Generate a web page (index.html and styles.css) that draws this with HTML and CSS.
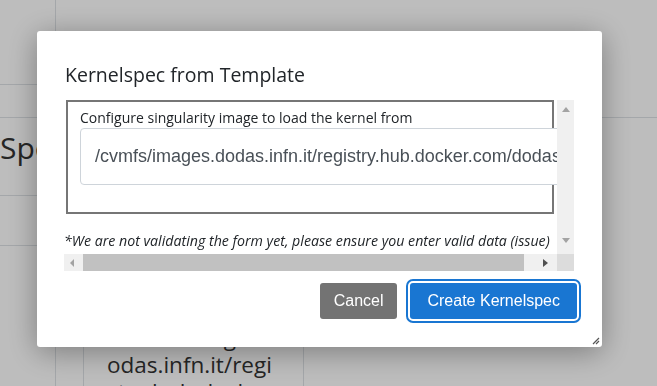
FILE: index.html
```html
<!DOCTYPE html>
<html lang="en">
<head>
    <meta charset="UTF-8">
    <meta name="viewport" content="width=device-width, initial-scale=1.0">
    <title>Kernelspec from Template</title>
    <link rel="stylesheet" href="styles.css">
</head>
<body>
    <div class="page">
        <div class="side">
            <div class="cell c1"></div>
            <div class="cell c2"></div>
            <div class="cell c3"><span class="heading">Spec</span></div>
            <div class="cell c4"></div>
        </div>
        <div class="main">
            <div class="top-row"></div>
            <div class="spacer"></div>
            <div class="path-cell">/cvmfs/images.d<br>odas.infn.it/regi<br>stry.hub.docker.c</div>
        </div>
    </div>

    <div class="backdrop"></div>

    <div class="modal">
        <h2 class="modal-title">Kernelspec from Template</h2>

        <div class="scroller">
            <div class="viewport">
                <div class="box">
                    <label class="field-label">Configure singularity image to load the kernel from</label>
                    <div class="field-input">/cvmfs/images.dodas.infn.it/registry.hub.docker.com/dodasts/root-in-docker:latest</div>
                </div>
                <p class="note">*We are not validating the form yet, please ensure you enter valid data (issue)</p>
            </div>
            <div class="vbar">
                <span class="arrow up"></span>
                <span class="arrow down"></span>
            </div>
            <div class="hbar">
                <span class="arrow left"></span>
                <span class="thumb"></span>
                <span class="arrow right"></span>
            </div>
            <div class="corner"></div>
        </div>

        <div class="modal-footer">
            <button class="btn btn-cancel">Cancel</button>
            <button class="btn btn-create">Create Kernelspec</button>
        </div>

        <svg class="grip" width="8" height="8" viewBox="0 0 8 8">
            <path d="M1 7 L7 1 M4 7 L7 4" stroke="#555" stroke-width="1.2"/>
        </svg>
    </div>
</body>
</html>
```

FILE: styles.css
```css
html, body { margin: 0; height: 100%; overflow: hidden; }
body { font-family: "Open Sans", "Noto Sans", sans-serif; color: #212529; background: #fff; }

/* page behind the dialog */
.page { display: flex; height: 386px; overflow: hidden; }
.side { width: 55px; border-right: 1px solid #dee2e6; flex-shrink: 0; }
.cell { border-bottom: 1px solid #dee2e6; }
.c1 { height: 84px; }
.c2 { height: 32px; }
.c3 { height: 78px; box-sizing: border-box; padding-top: 10px; white-space: nowrap; }
.c4 { height: 49px; }
.heading { font-size: 30px; line-height: 40px; color: #333; }
.main { flex: 1; display: flex; flex-direction: column; }
.top-row { height: 117px; border-bottom: 1px solid #dee2e6; flex-shrink: 0; }
.spacer { flex: 1; }
.path-cell {
    margin-left: 27px; width: 173px; height: 62px; padding: 14px 23px 0 23px; flex-shrink: 0;
    border-left: 1px solid #dee2e6; border-right: 1px solid #dee2e6;
    font-size: 22.5px; line-height: 27px; white-space: nowrap; overflow: hidden; color: #333;
}

.backdrop { position: fixed; inset: 0; background: rgba(0, 0, 0, 0.26); }

/* dialog */
.modal {
    position: fixed; left: 37px; top: 31px; width: 565px; height: 316px;
    box-sizing: border-box; background: #fff; border-radius: 3px;
    box-shadow: 0 5px 30px rgba(0, 0, 0, 0.35);
    padding: 31px 0 0 27px;
}
.modal-title { margin: 0 0 12px 1px; font-size: 19.5px; font-weight: 400; line-height: 26px; color: #212529; }

.scroller {
    width: 510px; height: 171px;
    display: grid; grid-template-columns: 493px 17px; grid-template-rows: 154px 17px;
}
.viewport { overflow: hidden; }
.box {
    margin-left: 2px; width: 488px; height: 114px; box-sizing: border-box;
    border: 2px solid #767676; padding: 6px 0 0 12px;
}
.field-label { display: block; font-size: 14px; line-height: 19px; }
.field-input {
    width: 620px; height: 57px; box-sizing: border-box; margin-top: 1px;
    border: 1px solid #ced4da; border-radius: 4px; padding: 0 14px;
    font-family: "Liberation Sans", Arial, sans-serif; font-size: 18px; line-height: 55px;
    color: #495057; background: #fff; white-space: nowrap; overflow: hidden;
}
.note { margin: 18px 0 0; font-size: 14.2px; font-style: italic; line-height: 18px; white-space: nowrap; }

.vbar { background: #f0f0f0; display: flex; flex-direction: column; justify-content: space-between; align-items: center; padding: 7px 0 11px; box-sizing: border-box; }
.hbar { background: #f0f0f0; display: flex; align-items: center; }
.corner { background: #dcdcdc; }
.thumb { height: 17px; width: 441px; background: #c1c1c1; }
.arrow { width: 0; height: 0; border-style: solid; }
.up { border-width: 0 4.5px 5px; border-color: transparent transparent #a3a3a3; }
.down { border-width: 5px 4.5px 0; border-color: #a3a3a3 transparent transparent; }
.left { margin: 0 9px 0 6px; border-width: 4px 4px 4px 0; border-color: transparent #a3a3a3 transparent transparent; }
.right { margin-left: 19px; border-width: 4.5px 0 4.5px 5px; border-color: transparent transparent transparent #505050; }

.modal-footer { display: flex; justify-content: flex-end; gap: 13px; padding: 12px 25px 0 0; }
.btn {
    height: 36px; border: none; border-radius: 3px; color: #fff;
    font-family: "Liberation Sans", Arial, sans-serif; font-size: 16px; padding: 0 14px;
}
.btn-cancel { background: #737373; }
.btn-create { background: #1976d2; padding: 0 17px; outline: 2px solid #1976d2; outline-offset: 2px; }

.grip { position: absolute; right: 2px; bottom: 2px; }
```
